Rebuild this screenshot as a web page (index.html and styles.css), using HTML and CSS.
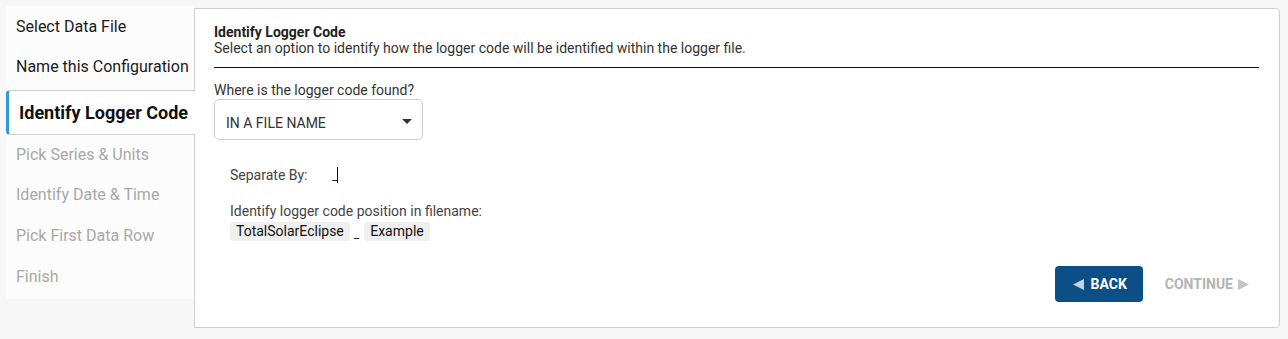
FILE: index.html
```html
<!DOCTYPE html>
<html>
<head>
<meta charset="utf-8">
<link rel="stylesheet" href="styles.css">
</head>
<body>
<div class="page">
  <nav class="steps">
    <div class="step done">Select Data File</div>
    <div class="step done">Name this Configuration</div>
    <div class="step active">Identify Logger Code</div>
    <div class="step todo">Pick Series &amp; Units</div>
    <div class="step todo">Identify Date &amp; Time</div>
    <div class="step todo">Pick First Data Row</div>
    <div class="step todo">Finish</div>
  </nav>
  <main class="panel">
    <header class="panel-head">
      <div class="title">Identify Logger Code</div>
      <div class="subtitle">Select an option to identify how the logger code will be identified within the logger file.</div>
    </header>
    <div class="field">
      <div class="label">Where is the logger code found?</div>
      <div class="select">
        <span>IN A FILE NAME</span>
        <svg class="caret" width="10" height="5" viewBox="0 0 10 5"><path d="M0 0h10L5 5z" fill="#333"/></svg>
      </div>
    </div>
    <div class="sub">
      <div class="sep-row">
        <span class="sep-label">Separate By:</span>
        <span class="sep-input">_<span class="cursor"></span></span>
      </div>
      <div class="pos-label">Identify logger code position in filename:</div>
      <div class="chips">
        <span class="chip">TotalSolarEclipse</span>
        <span class="us">_</span>
        <span class="chip">Example</span>
      </div>
    </div>
    <div class="actions">
      <button class="btn back"><svg width="11" height="11" viewBox="0 0 11 11"><path d="M11 0v11L0 5.5z" fill="#c5d3e1"/></svg>BACK</button>
      <button class="btn cont">CONTINUE<svg width="11" height="11" viewBox="0 0 11 11"><path d="M0 0v11l11-5.5z" fill="#c4c4c4"/></svg></button>
    </div>
  </main>
</div>
</body>
</html>
```
FILE: styles.css
```css
* { box-sizing: border-box; }
html, body { margin: 0; padding: 0; }
body {
  background: #f7f7f7;
  font-family: Roboto, "Noto Sans", sans-serif;
  width: 1288px;
  height: 339px;
  overflow: hidden;
}
.page {
  display: flex;
  align-items: flex-start;
  padding: 6px 8px 0 6px;
}
.steps {
  width: 188px;
  height: 293px;
  background: #fcfcfc;
  display: flex;
  flex-direction: column;
}
.step {
  height: 41px;
  display: flex;
  align-items: center;
  padding-left: 10px;
  font-size: 16px;
  color: #1a1a1a;
}
.step.done:first-child { height: 40px; }
.step.active {
  height: 45px;
  margin-top: 3px;
  margin-right: -1px;
  position: relative;
  z-index: 2;
  background: #fff;
  border: 1px solid #d0d0d0;
  border-right: none;
  border-left: 3px solid #2a9bd6;
  border-radius: 4px 0 0 4px;
  padding-left: 10px;
  font-size: 18px;
  font-weight: 700;
  color: #111;
}
.step.todo { color: #a8a8a8; }
.step.active + .step { margin-top: -1px; height: 40px; }
.panel {
  flex: 1;
  margin-top: 2px;
  height: 320px;
  background: #fff;
  border: 1px solid #cfcfcf;
  border-radius: 0 4px 4px 0;
  padding: 15px 20px 0 19px;
  display: flex;
  flex-direction: column;
  color: #333;
}
.panel-head {
  border-bottom: 1px solid #111;
  padding-bottom: 11px;
}
.title {
  font-size: 14px;
  font-weight: 700;
  color: #222;
  line-height: 16px;
}
.subtitle {
  font-size: 14px;
  line-height: 16px;
  color: #333;
}
.field { margin-top: 14px; }
.label { font-size: 14px; line-height: 16px; color: #333; }
.select {
  margin-top: 1px;
  width: 209px;
  height: 41px;
  border: 1px solid #cfcfcf;
  border-radius: 5px;
  display: flex;
  align-items: center;
  justify-content: space-between;
  padding: 7px 10px 0 11px;
  font-size: 14px;
  color: #333;
}
.caret { margin-top: -3px; }
.sub {
  margin-top: 23px;
  padding-left: 16px;
  font-size: 14px;
  color: #444;
}
.sep-row { display: flex; align-items: flex-end; height: 20px; }
.sep-label { width: 102px; line-height: 16px; }
.sep-input {
  color: #222;
  line-height: 14px;
  font-size: 12px;
}
.cursor {
  display: inline-block;
  width: 1px;
  height: 16px;
  background: #111;
  vertical-align: bottom;
}
.pos-label { margin-top: 20px; line-height: 16px; }
.chips { display: flex; align-items: center; margin-top: 3px; }
.chip {
  background: #efefef;
  border-radius: 4px;
  padding: 1px 6px;
  font-size: 14px;
  color: #111;
  line-height: 17px;
}
.us { margin: 4px 5px 0 4px; color: #222; font-size: 12px; }
.actions {
  margin-top: 25px;
  display: flex;
  justify-content: flex-end;
  gap: 22px;
}
.btn {
  font-family: Roboto, "Noto Sans", sans-serif;
  font-weight: 700;
  font-size: 14px;
  border: none;
  display: flex;
  align-items: center;
  gap: 7px;
  height: 36px;
}
.back {
  width: 88px;
  background: #0b4f86;
  color: #fff;
  border-radius: 4px;
  justify-content: center;
  padding: 0 0 0 2px;
}
.cont {
  background: none;
  color: #b3b3b3;
  padding: 0 10px 0 0;
  gap: 5px;
}
```
